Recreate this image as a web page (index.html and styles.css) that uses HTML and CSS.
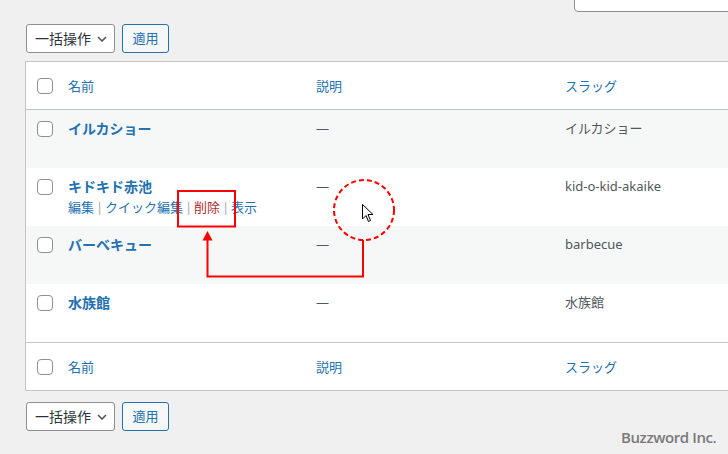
FILE: index.html
```html
<!DOCTYPE html>
<html lang="ja">
<head>
<meta charset="utf-8">
<title>タグ</title>
<link rel="stylesheet" href="styles.css">
</head>
<body>
<div class="page">
  <div class="search-row"><div class="search-box"></div></div>

  <div class="tablenav top">
    <div class="bulk-select">一括操作<svg class="chev" width="10" height="6" viewBox="0 0 10 6"><path d="M1 1l4 4 4-4" fill="none" stroke="#50575e" stroke-width="1.6"/></svg></div>
    <div class="apply-btn">適用</div>
  </div>

  <table class="list-table">
    <colgroup>
      <col class="c-check"><col class="c-name"><col class="c-desc"><col class="c-slug">
    </colgroup>
    <thead>
      <tr>
        <th class="check"><span class="cb"></span></th>
        <th><a>名前</a></th>
        <th><a>説明</a></th>
        <th><a>スラッグ</a></th>
      </tr>
    </thead>
    <tbody>
      <tr class="alt">
        <td class="check"><span class="cb"></span></td>
        <td><strong class="title">イルカショー</strong><div class="actions hidden">&nbsp;</div></td>
        <td class="desc">—</td>
        <td class="slug">イルカショー</td>
      </tr>
      <tr>
        <td class="check"><span class="cb"></span></td>
        <td><strong class="title">キドキド赤池</strong><div class="actions"><a>編集</a><span class="sep">|</span><a>クイック編集</a><span class="sep">|</span><a class="del">削除</a><span class="sep">|</span><a>表示</a></div></td>
        <td class="desc">—</td>
        <td class="slug">kid-o-kid-akaike</td>
      </tr>
      <tr class="alt">
        <td class="check"><span class="cb"></span></td>
        <td><strong class="title">バーベキュー</strong><div class="actions hidden">&nbsp;</div></td>
        <td class="desc">—</td>
        <td class="slug">barbecue</td>
      </tr>
      <tr>
        <td class="check"><span class="cb"></span></td>
        <td><strong class="title">水族館</strong><div class="actions hidden">&nbsp;</div></td>
        <td class="desc">—</td>
        <td class="slug">水族館</td>
      </tr>
    </tbody>
    <tfoot>
      <tr>
        <th class="check"><span class="cb"></span></th>
        <th><a>名前</a></th>
        <th><a>説明</a></th>
        <th><a>スラッグ</a></th>
      </tr>
    </tfoot>
  </table>

  <div class="tablenav bottom">
    <div class="bulk-select">一括操作<svg class="chev" width="10" height="6" viewBox="0 0 10 6"><path d="M1 1l4 4 4-4" fill="none" stroke="#50575e" stroke-width="1.6"/></svg></div>
    <div class="apply-btn">適用</div>
  </div>

  <svg class="annot" width="728" height="454" viewBox="0 0 728 454">
    <rect x="178" y="191" width="57" height="35.5" fill="none" stroke="#ff0000" stroke-width="2"/>
    <circle cx="364" cy="210" r="30" fill="none" stroke="#ff0000" stroke-width="2" stroke-dasharray="5 3"/>
    <polyline points="363,240 363,276.5 207.5,276.5 207.5,239" fill="none" stroke="#ff0000" stroke-width="2"/>
    <polygon points="207.5,231 202.5,240.5 212.5,240.5" fill="#ff0000"/>
    <path d="M362.5 204.5 L362.5 219 L366 215.5 L368.5 221.5 L370.5 220.5 L368 214.5 L373 214.5 Z" fill="#fff" stroke="#000" stroke-width="1" stroke-linejoin="miter"/>
  </svg>

  <div class="watermark">Buzzword Inc.</div>
</div>
</body>
</html>
```

FILE: styles.css
```css
html, body {
  margin: 0;
  padding: 0;
}
body {
  background: #f0f0f1;
  width: 728px;
  height: 454px;
  overflow: hidden;
  font-family: "Noto Sans", "Noto Sans CJK JP", sans-serif;
  font-size: 13px;
  color: #3c434a;
}
.page {
  position: relative;
  width: 728px;
  height: 454px;
  padding-left: 25px;
  box-sizing: border-box;
}
.search-row {
  height: 12px;
  display: flex;
  justify-content: flex-end;
  align-items: flex-end;
}
.search-box {
  width: 164px;
  height: 32px;
  margin-right: -10px;
  flex: none;
  background: #fff;
  border: 1px solid #8c8f94;
  border-radius: 4px;
  box-sizing: border-box;
}
.tablenav {
  display: flex;
  gap: 7px;
  height: 29px;
  padding-left: 1px;
}
.tablenav.top {
  margin-top: 12px;
}
.tablenav.bottom {
  margin-top: 11px;
}
.bulk-select {
  width: 89px;
  height: 29px;
  box-sizing: border-box;
  border: 1px solid #8c8f94;
  border-radius: 3px;
  background: #fff;
  font-size: 14px;
  color: #2c3338;
  display: flex;
  align-items: center;
  padding-left: 8px;
  gap: 6px;
  line-height: 1;
}
.chev {
  margin-top: 1px;
}
.apply-btn {
  width: 47px;
  height: 29px;
  box-sizing: border-box;
  border: 1px solid #2271b1;
  border-radius: 3px;
  background: #f6f7f7;
  color: #2271b1;
  font-size: 13px;
  display: flex;
  align-items: center;
  justify-content: center;
  line-height: 1;
}
.list-table {
  margin-top: 8px;
  width: 720px;
  table-layout: fixed;
  border-collapse: separate;
  border-spacing: 0;
  background: #fff;
  border: 1px solid #c3c4c7;
}
.c-check { width: 32px; }
.c-name { width: 248px; }
.c-desc { width: 249px; }
.list-table th {
  height: 47px;
  padding: 0 10px;
  text-align: left;
  font-weight: 400;
  font-size: 13px;
  line-height: 20px;
  vertical-align: middle;
}
.list-table th a {
  color: #2271b1;
}
.list-table thead th {
  border-bottom: 1px solid #c3c4c7;
}
.list-table tfoot th {
  border-top: 1px solid #c3c4c7;
}
.list-table th.check,
.list-table td.check {
  padding: 0 0 0 11px;
}
.list-table td.check {
  vertical-align: top;
  padding-top: 11px;
}
.list-table th.check .cb {
  margin-top: 1px;
}
.cb {
  display: block;
  width: 16px;
  height: 16px;
  box-sizing: border-box;
  border: 1px solid #8c8f94;
  border-radius: 4px;
  background: #fff;
}
.list-table td {
  padding: 8px 10px 9px;
  vertical-align: top;
  line-height: 20px;
  height: 41px;
}
.list-table tbody tr.alt td {
  background: #f6f7f7;
}
.title {
  display: block;
  color: #2271b1;
  font-size: 14px;
  font-weight: 700;
  line-height: 21px;
}
.actions {
  padding-top: 1px;
  font-size: 13px;
  line-height: 19px;
  color: #a7aaad;
  white-space: nowrap;
}
.actions a {
  color: #2271b1;
}
.actions a.del {
  color: #b32d2e;
}
.actions .sep {
  display: inline-block;
  width: 11px;
  text-align: center;
}
.actions.hidden {
  visibility: hidden;
}
.desc, .slug {
  color: #50575e;
  font-size: 13px;
}
.desc {
  padding-top: 9px;
}
.annot {
  position: absolute;
  left: 0;
  top: 0;
  pointer-events: none;
}
.watermark {
  position: absolute;
  left: 621px;
  top: 427px;
  font-family: "Open Sans", sans-serif;
  font-weight: 600;
  font-size: 15px;
  letter-spacing: -0.4px;
  color: #7a7a7a;
  line-height: 20px;
}
```
